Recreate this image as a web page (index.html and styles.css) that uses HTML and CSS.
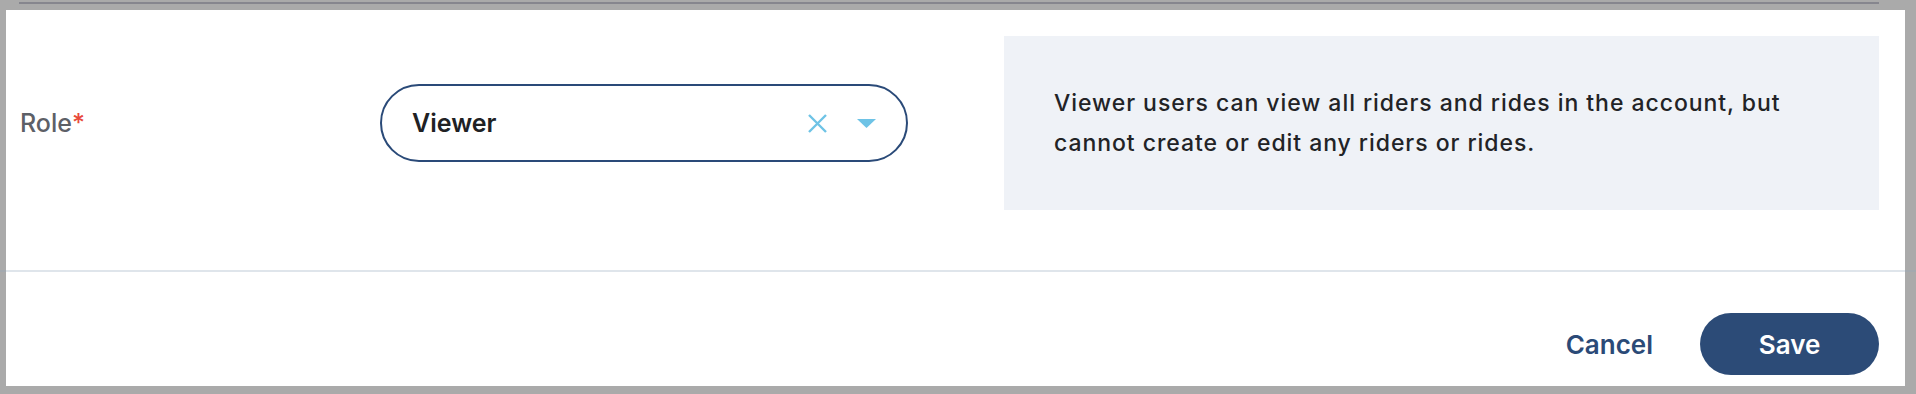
FILE: index.html
```html
<!DOCTYPE html>
<html lang="en">

<head>
  <meta charset="UTF-8" />
  <meta name="viewport" content="width=device-width, initial-scale=1" />
  <title>Edit user role</title>
  <link rel="stylesheet" href="styles.css">
</head>

<body>
  <div class="top-line"></div>

  <div class="panel">
    <div class="field-row">
      <label class="field-label" for="role">Role<span class="required">*</span></label>

      <div class="select" id="role">
        <span class="select-value">Viewer</span>
        <span class="select-clear">
          <svg width="21" height="21" viewBox="0 0 21 21">
            <path d="M2 2 L19 19 M19 2 L2 19" stroke="#6ec3e6" stroke-width="2.4" fill="none" />
          </svg>
        </span>
        <span class="select-arrow">
          <svg width="19" height="9" viewBox="0 0 19 9">
            <path d="M0 0 H19 L9.5 9 Z" fill="#6ec3e6" />
          </svg>
        </span>
      </div>

      <div class="role-info">
        <p>Viewer users can view all riders and rides in the account, but<br>cannot create or edit any riders or rides.</p>
      </div>
    </div>

    <div class="divider"></div>

    <div class="actions">
      <button class="btn-link" type="button">Cancel</button>
      <button class="btn-primary" type="button">Save</button>
    </div>
  </div>
</body>

</html>
```

FILE: styles.css
```css
body {
  margin: 0;
  background: #aaaaaa;
  font-family: Inter, 'Open Sans', sans-serif;
  color: #222326;
}

.top-line {
  height: 2px;
  margin: 2px 37px 0 19px;
  background: #86868e;
}

.panel {
  background: white;
  margin: 6px 11px 0 6px;
  height: 376px;
  display: flex;
  flex-direction: column;
}

.field-row {
  display: grid;
  grid-template-columns: 360px 528px 1fr;
  align-items: center;
  padding: 26px 26px 0 14px;
}

.field-label {
  font-size: 25px;
  font-weight: 500;
  color: #5d6067;
}

.required {
  color: #e84a3b;
}

.select {
  height: 74px;
  border: 2px solid #2a4a78;
  border-radius: 40px;
  display: flex;
  align-items: center;
  padding: 0 30px 0 30px;
}

.select-value {
  flex: 1;
  font-size: 25px;
  font-weight: 600;
  color: #202124;
}

.select-clear,
.select-arrow {
  display: flex;
  align-items: center;
}

.select-clear {
  margin-right: 29px;
}

.role-info {
  margin-left: 96px;
  height: 174px;
  background: #eff2f7;
  display: flex;
  align-items: center;
  padding: 0 30px 0 50px;
}

.role-info p {
  margin: 0;
  font-size: 23px;
  font-weight: 500;
  letter-spacing: 0.95px;
  line-height: 40px;
}

.divider {
  height: 2px;
  margin: 60px -11px 0 -6px;
  background: rgba(150, 170, 190, 0.3);
}

.actions {
  display: flex;
  justify-content: flex-end;
  align-items: center;
  gap: 47px;
  padding: 41px 26px 0 0;
}

.btn-link {
  background: none;
  border: none;
  padding: 0;
  font-family: inherit;
  font-size: 26px;
  font-weight: 600;
  color: #2b4a77;
}

.btn-primary {
  width: 179px;
  height: 62px;
  border: none;
  border-radius: 31px;
  background: #2c4b77;
  color: white;
  font-family: inherit;
  font-size: 26px;
  font-weight: 600;
}
```
